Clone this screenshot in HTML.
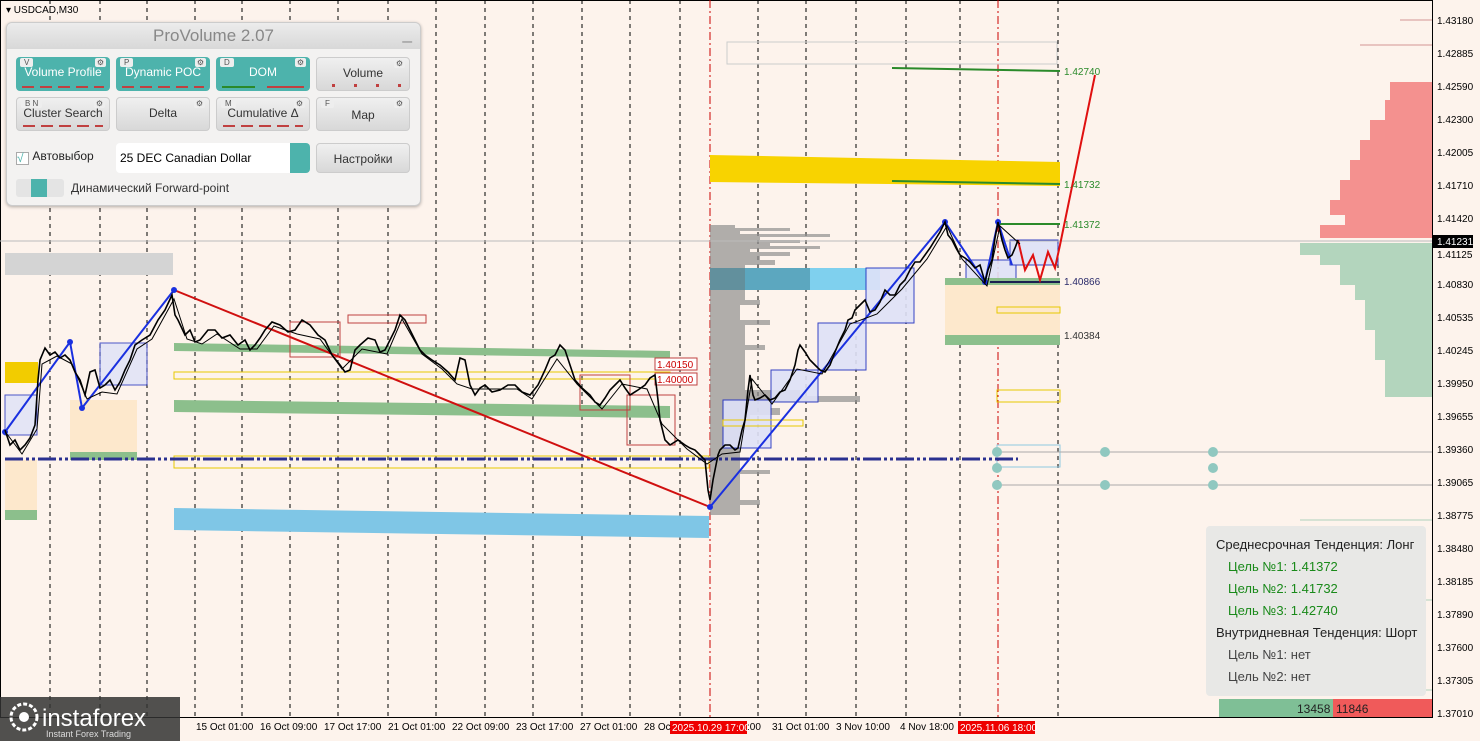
<!DOCTYPE html>
<html><head><meta charset="utf-8"><style>
body{margin:0;width:1480px;height:741px;overflow:hidden;background:#fdf3ec;font-family:"Liberation Sans","DejaVu Sans",sans-serif;position:relative}
.ax{position:absolute;left:1437px;font-size:10px;color:#000}
.bt{position:absolute;top:722px;font-size:10px;color:#000;white-space:nowrap}
#panel{position:absolute;left:6px;top:22px;width:413px;height:182px;background:#f3f2f1;border:1px solid #ccc;border-radius:6px;box-shadow:0 1px 3px rgba(0,0,0,.3)}
.hd{height:26px;background:linear-gradient(#ececec,#d8d8d8);border-radius:6px 6px 0 0;text-align:center;color:#888;font-size:17px;line-height:26px;position:relative}
.btn{position:absolute;width:94px;height:34px;border-radius:4px;font-size:12px;text-align:center;line-height:34px}
.on{background:#4db3ac;color:#fff}.off{background:linear-gradient(#f0f0f0,#d8d8d8);color:#333;border:1px solid #ccc;box-sizing:border-box}
.tag{position:absolute;top:1px;left:4px;font-size:8px;line-height:9px;color:#555;background:#eee;padding:0 4px;border-radius:2px}
.gear{position:absolute;top:1px;right:4px;font-size:8px;line-height:9px;color:#555;background:#eee;padding:0 2px;border-radius:2px}
.mk{position:absolute;bottom:3px;left:6px;right:6px;height:2px;background:repeating-linear-gradient(90deg,#c04040 0 12px,transparent 12px 18px)}
</style></head><body>
<svg width="1480" height="741" style="position:absolute;left:0;top:0">
<rect x="0" y="0" width="1433" height="717" fill="#fdf3ec"/>
<rect x="0.5" y="0.5" width="1432" height="717" fill="none" stroke="#000"/>
<g stroke="#000" stroke-dasharray="4,4" stroke-width="1">
<line x1="50" y1="0" x2="50" y2="717"/><line x1="100" y1="0" x2="100" y2="717"/><line x1="147" y1="0" x2="147" y2="717"/><line x1="195" y1="0" x2="195" y2="717"/><line x1="242" y1="0" x2="242" y2="717"/><line x1="290" y1="0" x2="290" y2="717"/><line x1="338" y1="0" x2="338" y2="717"/><line x1="388" y1="0" x2="388" y2="717"/><line x1="436" y1="0" x2="436" y2="717"/><line x1="485" y1="0" x2="485" y2="717"/><line x1="533" y1="0" x2="533" y2="717"/><line x1="582" y1="0" x2="582" y2="717"/><line x1="630" y1="0" x2="630" y2="717"/><line x1="680" y1="0" x2="680" y2="717"/><line x1="758" y1="0" x2="758" y2="717"/><line x1="806" y1="0" x2="806" y2="717"/><line x1="856" y1="0" x2="856" y2="717"/><line x1="906" y1="0" x2="906" y2="717"/><line x1="960" y1="0" x2="960" y2="717"/><line x1="1058" y1="0" x2="1058" y2="717"/>
</g>
<g stroke="#c00" stroke-dasharray="8,3,2,3"><line x1="710" y1="0" x2="710" y2="717"/><line x1="998" y1="0" x2="998" y2="717"/></g>
<rect x="5" y="253" width="168" height="22" fill="#d4d4d4"/>
<rect x="5" y="362" width="33" height="21" fill="#f2cc00"/>
<rect x="70" y="400" width="67" height="55" fill="#fde8cc"/><rect x="70" y="452" width="67" height="8" fill="#8cbf8c"/>
<rect x="5" y="460" width="32" height="52" fill="#fde8cc"/><rect x="5" y="510" width="32" height="10" fill="#8cbf8c"/>
<polygon points="174,508 709,516 709,538 174,530" fill="#7fc6e6"/>
<polygon points="174,400 670,406 670,418 174,412" fill="#8cbf8c"/>
<polygon points="174,343 670,351 670,358 174,351" fill="#8cbf8c"/>
<g fill="none" stroke="#e8c800"><rect x="174" y="372" width="496" height="7"/><rect x="174" y="456" width="535" height="12"/></g>
<g fill="none" stroke="#c04040"><rect x="290" y="322" width="50" height="35"/><rect x="348" y="315" width="78" height="8"/><rect x="580" y="375" width="50" height="35"/><rect x="627" y="395" width="48" height="50"/></g>
<rect x="655" y="358" width="42" height="12" fill="#fff" stroke="#c04040"/><text x="657" y="368" font-size="10" fill="#c00">1.40150</text>
<rect x="655" y="373" width="42" height="12" fill="#fff" stroke="#c04040"/><text x="657" y="383" font-size="10" fill="#c00">1.40000</text>
<g fill="#dfe2f8" stroke="#2030c0"><rect x="5" y="395" width="32" height="40" opacity=".8"/><rect x="100" y="343" width="47" height="42" opacity=".8"/></g>
<polygon points="710,155 1060,162 1060,186 710,182" fill="#f8d300"/>
<rect x="710" y="268" width="170" height="22" fill="#7fd0ee"/>
<g fill="#8e8e8e" opacity=".7">
<path d="M710 225 H735 V228 H790 V231 H740 V234 H830 V237 H760 V240 H800 V243 H770 V246 H820 V249 H750 V252 H790 V256 H760 V260 H775 V265 H745 V300 H760 V305 H740 V320 H770 V325 H745 V345 H765 V350 H745 V390 H800 V396 H860 V402 H770 V408 H780 V415 H750 V430 H740 V470 H770 V474 H740 V500 H760 V505 H740 V515 H710 Z"/>
</g>
<rect x="710" y="268" width="100" height="22" fill="#3a7d8f" opacity=".5"/>
<g fill="#dfe2f8" stroke="#2030c0" opacity=".9"><rect x="723" y="400" width="48" height="48"/><rect x="771" y="370" width="47" height="32"/><rect x="818" y="323" width="48" height="47"/><rect x="866" y="268" width="48" height="55"/><rect x="966" y="260" width="50" height="20"/><rect x="1010" y="240" width="48" height="25"/></g>
<rect x="945" y="285" width="115" height="50" fill="#fde8cc"/>
<rect x="945" y="278" width="115" height="7" fill="#8cbf8c"/><rect x="945" y="335" width="115" height="10" fill="#8cbf8c"/>
<g fill="none" stroke="#e8c800"><rect x="997" y="307" width="63" height="6"/><rect x="997" y="390" width="63" height="12"/><rect x="723" y="420" width="80" height="6"/></g>
<rect x="997" y="445" width="63" height="22" fill="none" stroke="#90c8e0"/>
<g fill="none" stroke="#ccc"><rect x="727" y="42" width="330" height="22"/></g>
<line x1="892" y1="68" x2="1060" y2="71" stroke="#2a8a2a" stroke-width="2"/>
<line x1="892" y1="181" x2="1060" y2="184" stroke="#2a8a2a" stroke-width="2"/>
<line x1="998" y1="224" x2="1060" y2="224" stroke="#2a8a2a" stroke-width="2"/>
<line x1="990" y1="282" x2="1060" y2="282" stroke="#1a2050" stroke-width="2"/>
<g stroke="#aaa"><line x1="997" y1="452" x2="1432" y2="452"/><line x1="997" y1="485" x2="1432" y2="485"/></g>
<g fill="#90c8c0"><circle cx="997" cy="452" r="5"/><circle cx="997" cy="468" r="5"/><circle cx="997" cy="485" r="5"/><circle cx="1105" cy="452" r="5"/><circle cx="1105" cy="485" r="5"/><circle cx="1213" cy="452" r="5"/><circle cx="1213" cy="468" r="5"/><circle cx="1213" cy="485" r="5"/></g>
<line x1="0" y1="241" x2="1432" y2="241" stroke="#bbb"/>
<path d="M1432 82 H1390 V100 H1385 V120 H1370 V140 H1360 V160 H1350 V180 H1340 V200 H1330 V215 H1345 V225 H1320 V238 H1432Z" fill="#f07070" opacity=".75"/>
<path d="M1432 243 H1300 V255 H1320 V265 H1340 V285 H1355 V300 H1365 V330 H1375 V360 H1385 V397 H1432Z" fill="#8cc4a4" opacity=".65"/>
<g stroke="#c07070" opacity=".7"><line x1="1400" y1="20" x2="1432" y2="20"/><line x1="1360" y1="45" x2="1432" y2="45"/></g>
<g stroke="#9cc8b0" opacity=".8"><line x1="1300" y1="520" x2="1432" y2="520"/><line x1="1350" y1="600" x2="1432" y2="600"/><line x1="1310" y1="690" x2="1432" y2="690"/></g>
<line x1="5" y1="459" x2="1018" y2="459" stroke="#2a3090" stroke-width="3" stroke-dasharray="18,3,3,3,3,3"/>
<line x1="174" y1="290" x2="710" y2="507" stroke="#d01010" stroke-width="2"/>
<polyline points="5,432 70,342 82,408 174,290" fill="none" stroke="#1a30e0" stroke-width="2"/>
<polyline points="710,507 945,222 985,282 998,222 1012,265" fill="none" stroke="#1a30e0" stroke-width="2"/>
<polyline points="1018,240 1025,270 1033,255 1040,280 1048,252 1055,268 1060,245 1095,75" fill="none" stroke="#e01010" stroke-width="2"/>
<g fill="#1a30e0"><circle cx="70" cy="342" r="3"/><circle cx="82" cy="408" r="3"/><circle cx="174" cy="290" r="3"/><circle cx="710" cy="507" r="3"/><circle cx="945" cy="222" r="3"/><circle cx="985" cy="282" r="3"/><circle cx="998" cy="222" r="3"/><circle cx="5" cy="432" r="3"/></g>
<g fill="none" stroke="#000" stroke-width="1.6">
<polyline points="5,430 10,445 15,440 20,450 25,445 30,438 35,425 38,380 40,360 45,348 50,355 55,352 60,358 65,355 70,360 75,372 80,380 85,395 90,372 95,370 100,388 105,385 110,380 115,390 120,382 125,370 130,360 135,345 142,340 150,335 158,320 165,310 172,295 175,315 178,320 185,335 190,330 195,342 200,340 208,330 215,330 222,338 230,335 238,345 245,340 250,350 255,345 260,338 265,330 272,322 280,325 288,332 295,330 302,320 310,325 318,335 325,340 332,355 340,365 345,372 350,370 355,350 360,345 368,338 375,340 380,352 385,350 390,340 395,330 400,315 405,320 410,330 415,340 420,350 425,355 432,360 440,365 448,372 455,380 460,358 465,360 470,385 475,395 480,388 485,385 492,392 500,390 508,385 515,385 522,392 530,395 538,385 545,370 550,358 555,355 560,345 565,350 570,365 575,380 582,388 590,395 595,402 600,405 605,398 610,390 615,385 620,380 625,388 630,395 638,390 645,385 650,378 655,375 658,400 660,420 665,440 670,445 678,440 685,445 690,448 695,450 700,455 705,460 708,490 710,500 713,480 715,470 718,455 720,450 725,445 730,445 735,450 738,448 742,430 745,420 748,390 750,375 753,395 755,400 760,398 765,395 770,400 775,398 780,392 785,390 790,380 795,365 798,350 800,345 805,352 810,360 815,365 820,370 825,372 830,365 835,352 840,340 845,330 848,320 852,318 855,310 860,305 865,300 870,312 875,310 880,302 885,290 890,295 895,295 900,285 905,280 910,270 915,262 920,262 925,255 930,248 935,240 940,232 945,222 948,235 952,240 956,248 960,255 965,258 970,262 975,268 980,265 985,282 988,270 992,260 995,238 998,222 1002,240 1005,250 1008,258 1012,255 1015,248 1018,240"/>
<polyline stroke-width="1" transform="translate(2,4)" points="5,430 20,450 35,425 40,360 55,352 70,360 85,395 100,388 115,390 135,345 150,335 172,295 185,335 200,340 215,330 238,345 255,345 272,322 295,330 318,335 340,365 360,345 385,350 400,315 420,350 440,365 455,380 470,385 485,385 515,385 530,395 555,355 575,380 600,405 620,380 645,385 660,420 685,445 705,460 720,450 738,448 750,375 770,400 795,365 820,370 848,320 875,310 900,285 925,255 945,222 960,255 985,282 998,222 1018,240"/>
</g>
<g font-size="10"><text x="1064" y="75" fill="#2a8a2a">1.42740</text><text x="1064" y="188" fill="#2a8a2a">1.41732</text><text x="1064" y="228" fill="#2a8a2a">1.41372</text><text x="1064" y="285" fill="#2a2a6a">1.40866</text><text x="1064" y="339" fill="#333">1.40384</text></g>
<rect x="1206" y="526" width="220" height="170" rx="4" fill="#e8e8e6"/>
<g font-size="13"><text x="1216" y="549" fill="#222">Среднесрочная Тенденция: Лонг</text>
<text x="1228" y="571" fill="#1a8a1a">Цель №1: 1.41372</text><text x="1228" y="593" fill="#1a8a1a">Цель №2: 1.41732</text><text x="1228" y="615" fill="#1a8a1a">Цель №3: 1.42740</text>
<text x="1216" y="637" fill="#222">Внутридневная Тенденция: Шорт</text>
<text x="1228" y="659" fill="#444">Цель №1: нет</text><text x="1228" y="681" fill="#444">Цель №2: нет</text></g>
<rect x="1219" y="699" width="114" height="18" fill="#7fbf96"/><rect x="1333" y="699" width="99" height="18" fill="#f05a5a"/>
<text x="1297" y="713" font-size="12" fill="#222">13458</text><text x="1336" y="713" font-size="12" fill="#222">11846</text>
<rect x="1433" y="235" width="40" height="13" fill="#000"/><text x="1437" y="245" font-size="10" fill="#fff">1.41231</text>
<rect x="0" y="697" width="180" height="44" fill="#333" opacity=".85"/>
<circle cx="24" cy="717" r="13" fill="none" stroke="#fff" stroke-width="3" stroke-dasharray="4,2"/><circle cx="24" cy="717" r="5" fill="#fff"/>
<text x="42" y="726" font-size="24" fill="#fff">instaforex</text><text x="46" y="737" font-size="9" fill="#ddd">Instant Forex Trading</text>
<rect x="670" y="721" width="77" height="13" fill="#e00"/><text x="672" y="731" font-size="10" fill="#fff">2025.10.29 17:00</text>
<rect x="958" y="721" width="77" height="13" fill="#e00"/><text x="960" y="731" font-size="10" fill="#fff">2025.11.06 18:00</text>
</svg>
<div style="position:absolute;left:6px;top:5px;font-size:10px">▾ USDCAD,M30</div>
<div class="ax" style="top:16px">1.43180</div><div class="ax" style="top:49px">1.42885</div><div class="ax" style="top:82px">1.42590</div><div class="ax" style="top:115px">1.42300</div><div class="ax" style="top:148px">1.42005</div><div class="ax" style="top:181px">1.41710</div><div class="ax" style="top:214px">1.41420</div><div class="ax" style="top:250px">1.41125</div><div class="ax" style="top:280px">1.40830</div><div class="ax" style="top:313px">1.40535</div><div class="ax" style="top:346px">1.40245</div><div class="ax" style="top:379px">1.39950</div><div class="ax" style="top:412px">1.39655</div><div class="ax" style="top:445px">1.39360</div><div class="ax" style="top:478px">1.39065</div><div class="ax" style="top:511px">1.38775</div><div class="ax" style="top:544px">1.38480</div><div class="ax" style="top:577px">1.38185</div><div class="ax" style="top:610px">1.37890</div><div class="ax" style="top:643px">1.37600</div><div class="ax" style="top:676px">1.37305</div><div class="ax" style="top:709px">1.37010</div>
<div class="bt" style="left:196px">15 Oct 01:00</div><div class="bt" style="left:260px">16 Oct 09:00</div><div class="bt" style="left:324px">17 Oct 17:00</div><div class="bt" style="left:388px">21 Oct 01:00</div><div class="bt" style="left:452px">22 Oct 09:00</div><div class="bt" style="left:516px">23 Oct 17:00</div><div class="bt" style="left:580px">27 Oct 01:00</div><div class="bt" style="left:644px">28 Oc</div><div class="bt" style="left:747px">:00</div><div class="bt" style="left:772px">31 Oct 01:00</div><div class="bt" style="left:836px">3 Nov 10:00</div><div class="bt" style="left:900px">4 Nov 18:00</div>
<div id="panel">
<div class="hd">ProVolume 2.07<span style="position:absolute;right:8px;top:-2px;color:#888">_</span></div>
<div class="btn on" style="left:9px;top:34px;line-height:30px">Volume Profile<span class="tag">V</span><span class="gear">⚙</span><span class="mk"></span></div>
<div class="btn on" style="left:109px;top:34px;line-height:30px">Dynamic POC<span class="tag">P</span><span class="gear">⚙</span><span class="mk"></span></div>
<div class="btn on" style="left:209px;top:34px;line-height:30px">DOM<span class="tag">D</span><span class="gear">⚙</span><span class="mk" style="background:linear-gradient(90deg,#2a8a2a 0 40%,transparent 40% 55%,#c04040 55%)"></span></div>
<div class="btn off" style="left:309px;top:34px;line-height:30px">Volume<span class="gear">⚙</span><span class="mk" style="height:3px;background:repeating-linear-gradient(90deg,transparent 0 9px,#c04040 9px 12px,transparent 12px 22px)"></span></div>
<div class="btn off" style="left:9px;top:74px;line-height:30px">Cluster Search<span class="tag">B N</span><span class="gear">⚙</span><span class="mk"></span></div>
<div class="btn off" style="left:109px;top:74px;line-height:30px">Delta<span class="gear">⚙</span></div>
<div class="btn off" style="left:209px;top:74px;line-height:30px">Cumulative Δ<span class="tag">M</span><span class="gear">⚙</span><span class="mk"></span></div>
<div class="btn off" style="left:309px;top:74px">Map<span class="tag">F</span><span class="gear">⚙</span></div>
<div style="position:absolute;left:9px;top:126px;font-size:12px;color:#222"><span style="display:inline-block;width:11px;height:11px;border:1px solid #aaa;background:#fff;vertical-align:-2px;color:#4db3ac;font-size:12px;line-height:10px">√</span> Автовыбор</div>
<div style="position:absolute;left:109px;top:120px;width:194px;height:30px;background:#fff;border-radius:4px;font-size:12px;line-height:30px;padding-left:4px;box-sizing:border-box">25 DEC Canadian Dollar<span style="position:absolute;right:0;top:0;width:20px;height:30px;background:#4db3ac;border-radius:0 4px 4px 0"></span></div>
<div class="btn off" style="left:309px;top:120px;height:30px;line-height:30px">Настройки</div>
<div style="position:absolute;left:9px;top:156px;width:48px;height:18px;background:#e4e4e4;border-radius:3px"><span style="position:absolute;left:15px;top:0;width:16px;height:18px;background:#4db3ac"></span></div>
<div style="position:absolute;left:64px;top:158px;font-size:12px;color:#333">Динамический Forward-point</div>
</div>
</body></html>
